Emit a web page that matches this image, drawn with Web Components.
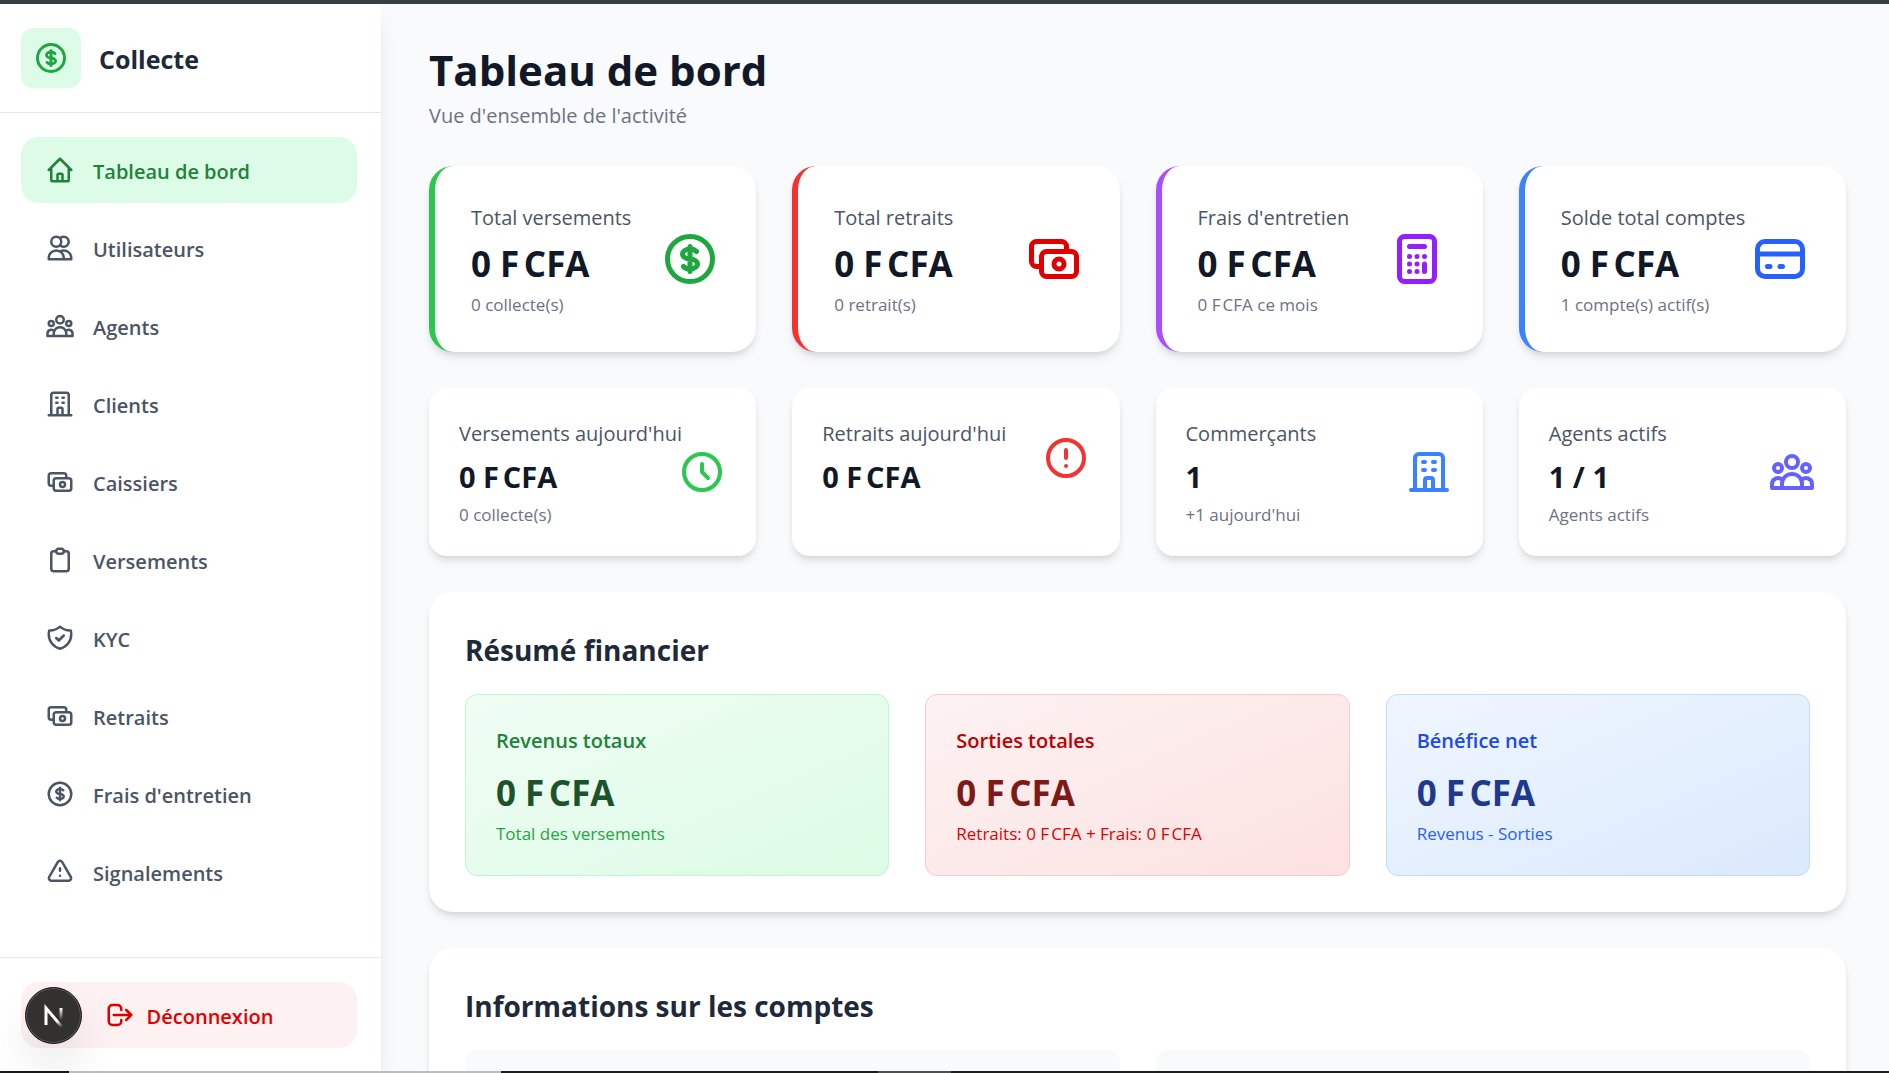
<!DOCTYPE html>
<html lang="fr">
<head>
<meta charset="utf-8">
<meta name="viewport" content="width=device-width, initial-scale=1">
<title>Collecte - Tableau de bord</title>
<style>
html, body{
  margin: 0;
  height: 100%;
}
body{
  overflow: hidden;
  background: #f9fafc;
  color: #111828;
  font-family: "Open Sans", "Noto Sans", sans-serif;
  font-size: 20px;
  line-height: 30px;
}
</style>
</head>
<body>
<app-shell>
  <side-bar slot="side">
    <nav-item icon="home" href="#dashboard" active>Tableau de bord</nav-item>
    <nav-item icon="users" href="#utilisateurs">Utilisateurs</nav-item>
    <nav-item icon="group" href="#agents">Agents</nav-item>
    <nav-item icon="building" href="#clients">Clients</nav-item>
    <nav-item icon="cash" href="#caissiers">Caissiers</nav-item>
    <nav-item icon="clipboard" href="#versements">Versements</nav-item>
    <nav-item icon="shield" href="#kyc">KYC</nav-item>
    <nav-item icon="cash" href="#retraits">Retraits</nav-item>
    <nav-item icon="dollar" href="#frais">Frais d'entretien</nav-item>
    <nav-item icon="warning" href="#signalements">Signalements</nav-item>
  </side-bar>

  <page-header>
    Tableau de bord
    <span slot="sub">Vue d'ensemble de l'activité</span>
  </page-header>

  <card-grid cols="4">
    <stat-card large icon="dollar" label="Total versements" value="0&nbsp;F&#8239;CFA" note="0 collecte(s)" style="--accent:#2bc84f;--icon:#1ea63f"></stat-card>
    <stat-card large icon="cash" label="Total retraits" value="0&nbsp;F&#8239;CFA" note="0 retrait(s)" style="--accent:#f5322f;--icon:#e00000"></stat-card>
    <stat-card large icon="calculator" label="Frais d'entretien" value="0&nbsp;F&#8239;CFA" note="0&nbsp;F&#8239;CFA ce mois" style="--accent:#a94dff;--icon:#931fff"></stat-card>
    <stat-card large icon="card" label="Solde total comptes" value="0&nbsp;F&#8239;CFA" note="1 compte(s) actif(s)" style="--accent:#3b82ff;--icon:#2660ff"></stat-card>
  </card-grid>

  <card-grid cols="4">
    <stat-card icon="clock" label="Versements aujourd'hui" value="0&nbsp;F&#8239;CFA" note="0 collecte(s)" style="--icon:#2bc84f"></stat-card>
    <stat-card icon="alert" label="Retraits aujourd'hui" value="0&nbsp;F&#8239;CFA" style="--icon:#f5322f"></stat-card>
    <stat-card icon="building" label="Commerçants" value="1" note="+1 aujourd'hui" style="--icon:#3b82ff"></stat-card>
    <stat-card icon="group" label="Agents actifs" value="1 / 1" note="Agents actifs" style="--icon:#6461ff"></stat-card>
  </card-grid>

  <page-section heading="Résumé financier">
    <card-grid cols="3">
      <sum-panel tone="green" label="Revenus totaux" value="0&nbsp;F&#8239;CFA">Total des versements</sum-panel>
      <sum-panel tone="red" label="Sorties totales" value="0&nbsp;F&#8239;CFA">Retraits: 0&nbsp;F&#8239;CFA + Frais: 0&nbsp;F&#8239;CFA</sum-panel>
      <sum-panel tone="blue" label="Bénéfice net" value="0&nbsp;F&#8239;CFA">Revenus - Sorties</sum-panel>
    </card-grid>
  </page-section>

  <page-section heading="Informations sur les comptes">
    <card-grid cols="2">
      <info-box></info-box>
      <info-box></info-box>
    </card-grid>
  </page-section>
</app-shell>
<dev-badge></dev-badge>

<script>
const ICONS = {
  home: 'M3 12l2-2m0 0l7-7 7 7M5 10v10a1 1 0 001 1h3m10-11l2 2m-2-2v10a1 1 0 01-1 1h-3m-6 0a1 1 0 001-1v-4a1 1 0 011-1h2a1 1 0 011 1v4a1 1 0 001 1m-6 0h6',
  users: 'M12 4.354a4 4 0 110 5.292M15 21H3v-1a6 6 0 0112 0v1zm0 0h6v-1a6 6 0 00-9-5.197M13 7a4 4 0 11-8 0 4 4 0 018 0z',
  group: 'M17 20h5v-2a3 3 0 00-5.356-1.857M17 20H7m10 0v-2c0-.656-.126-1.283-.356-1.857M7 20H2v-2a3 3 0 015.356-1.857M7 20v-2c0-.656.126-1.283.356-1.857m0 0a5.002 5.002 0 019.288 0M15 7a3 3 0 11-6 0 3 3 0 016 0zm6 3a2 2 0 11-4 0 2 2 0 014 0zM7 10a2 2 0 11-4 0 2 2 0 014 0z',
  building: 'M19 21V5a2 2 0 00-2-2H7a2 2 0 00-2 2v16m14 0h2m-2 0h-5m-9 0H3m2 0h5M9 7h1m-1 4h1m4-4h1m-1 4h1m-5 10v-5a1 1 0 011-1h2a1 1 0 011 1v5m-4 0h4',
  cash: 'M17 9V7a2 2 0 00-2-2H5a2 2 0 00-2 2v6a2 2 0 002 2h2m2 4h10a2 2 0 002-2v-6a2 2 0 00-2-2H9a2 2 0 00-2 2v6a2 2 0 002 2zm7-5a2 2 0 11-4 0 2 2 0 014 0z',
  clipboard: 'M9 5H7a2 2 0 00-2 2v12a2 2 0 002 2h10a2 2 0 002-2V7a2 2 0 00-2-2h-2M9 5a2 2 0 002 2h2a2 2 0 002-2M9 5a2 2 0 012-2h2a2 2 0 012 2',
  shield: 'M9 12l2 2 4-4m5.618-4.016A11.955 11.955 0 0112 2.944a11.955 11.955 0 01-8.618 3.04A12.02 12.02 0 003 9c0 5.591 3.824 10.29 9 11.622 5.176-1.332 9-6.03 9-11.622 0-1.042-.133-2.052-.382-3.016z',
  dollar: 'M12 8c-1.657 0-3 .895-3 2s1.343 2 3 2 3 .895 3 2-1.343 2-3 2m0-8c1.11 0 2.08.402 2.599 1M12 8V7m0 1v8m0 0v1m0-1c-1.11 0-2.08-.402-2.599-1M21 12a9 9 0 11-18 0 9 9 0 0118 0z',
  warning: 'M12 9v2m0 4h.01m-6.938 4h13.856c1.54 0 2.502-1.667 1.732-3L13.732 4c-.77-1.333-2.694-1.333-3.464 0L3.34 16c-.77 1.333.192 3 1.732 3z',
  logout: 'M17 16l4-4m0 0l-4-4m4 4H7m6 4v1a3 3 0 01-3 3H6a3 3 0 01-3-3V7a3 3 0 013-3h4a3 3 0 013 3v1',
  calculator: 'M9 7h6m0 10v-3m-3 3h.01M9 17h.01M9 14h.01M12 14h.01M15 11h.01M12 11h.01M9 11h.01M7 21h10a2 2 0 002-2V5a2 2 0 00-2-2H7a2 2 0 00-2 2v14a2 2 0 002 2z',
  card: 'M3 10h18M7 15h1m4 0h1m-7 4h12a3 3 0 003-3V8a3 3 0 00-3-3H6a3 3 0 00-3 3v8a3 3 0 003 3z',
  clock: 'M12 8v4l3 3m6-3a9 9 0 11-18 0 9 9 0 0118 0z',
  alert: 'M12 8v4m0 4h.01M21 12a9 9 0 11-18 0 9 9 0 0118 0z'
}

// every element only renders once, from its attributes
class Base extends HTMLElement {
  constructor(){
    super();
    this.attachShadow({mode:'open'});
  }
  connectedCallback(){
    this.shadowRoot.innerHTML = this.render()
  }
  attr(name){
    return this.getAttribute(name) || ''
  }
}

window.customElements.define('ui-icon', class extends Base {
  render(){
    return `
<style>
:host{
  display: block;
  flex: none;
  width: 30px;
  height: 30px;
}
svg{
  display: block;
  width: 100%;
  height: 100%;
}
</style>
<svg viewBox="0 0 24 24" fill="none" stroke="currentColor" stroke-width="2" stroke-linecap="round" stroke-linejoin="round" aria-hidden="true">
  <path d="${ICONS[this.attr('name')]}"/>
</svg>`
  }
})

window.customElements.define('app-shell', class extends Base {
  render(){
    return `
<style>
:host{
  display: flex;
  box-sizing: border-box;
  height: 100vh;
  border-top: 4px solid #383f40;
}
main{
  flex: 1;
  min-width: 0;
  overflow: hidden;
  display: flex;
  flex-direction: column;
  gap: 36px;
  padding: 36px 43px 0 48px;
}
</style>
<slot name="side"></slot>
<main><slot></slot></main>`
  }
})

window.customElements.define('side-bar', class extends Base {
  render(){
    return `
<style>
:host{
  display: flex;
  flex-direction: column;
  flex: none;
  width: 381px;
  background: white;
  box-shadow: 0 15px 23px -5px rgba(0,0,0,.1), 0 6px 9px -6px rgba(0,0,0,.1);
}
header{
  display: flex;
  align-items: center;
  gap: 18px;
  padding: 24px 24px 24px 21px;
  border-bottom: 1px solid #e3e5ea;
}
.logo{
  display: grid;
  place-items: center;
  width: 60px;
  height: 60px;
  border-radius: 12px;
  background: #dcfce7;
  color: #1ea63f;
}
.logo ui-icon{
  width: 36px;
  height: 36px;
}
strong{
  padding-top: 2px;
  font-size: 25px;
  font-weight: 700;
  color: #1e2939;
}
nav{
  flex: 1;
  display: flex;
  flex-direction: column;
  gap: 12px;
  padding: 24px 24px 24px 21px;
}
footer{
  padding: 24px 24px 25px 21px;
  border-top: 1px solid #e5e7eb;
}
button{
  display: flex;
  align-items: center;
  justify-content: center;
  gap: 12px;
  width: 100%;
  padding: 16px 18px;
  border: none;
  border-radius: 18px;
  background: #fdf1f1;
  color: #e00000;
  font: inherit;
  font-weight: 600;
  cursor: pointer;
}
button span{
  padding-top: 4px;
}
</style>
<header>
  <div class="logo"><ui-icon name="dollar"></ui-icon></div>
  <strong>Collecte</strong>
</header>
<nav><slot></slot></nav>
<footer>
  <button type="button"><ui-icon name="logout"></ui-icon><span>Déconnexion</span></button>
</footer>`
  }
})

window.customElements.define('nav-item', class extends Base {
  render(){
    return `
<style>
:host{
  display: block;
}
a{
  display: flex;
  align-items: center;
  gap: 18px;
  padding: 16px 24px;
  border-radius: 18px;
  color: #4b5565;
  font-weight: 600;
  text-decoration: none;
}
span{
  padding-top: 4px;
}
:host([active]) a{
  background: #dcfce7;
  color: #1d8339;
}
</style>
<a href="${this.attr('href')}"><ui-icon name="${this.attr('icon')}"></ui-icon><span><slot></slot></span></a>`
  }
})

window.customElements.define('page-header', class extends Base {
  render(){
    return `
<style>
:host{
  display: block;
}
h1{
  margin: 0 0 2px;
  font-size: 42px;
  line-height: 60px;
  font-weight: 700;
}
p{
  margin: 0;
  color: #6b7382;
  line-height: 28px;
}
</style>
<h1><slot></slot></h1>
<p><slot name="sub"></slot></p>`
  }
})

window.customElements.define('card-grid', class extends Base {
  render(){
    return `
<style>
:host{
  display: grid;
  grid-template-columns: repeat(${this.attr('cols')}, minmax(0, 1fr));
  gap: 36px;
}
</style>
<slot></slot>`
  }
})

window.customElements.define('stat-card', class extends Base {
  render(){
    const note = this.attr('note')
    return `
<style>
:host{
  display: block;
  padding: 30px;
  border-radius: 18px;
  background: white;
  box-shadow: 0 6px 9px -1px rgba(0,0,0,.1), 0 3px 6px -3px rgba(0,0,0,.1);
}
:host([large]){
  padding: 36px;
  border-left: 6px solid var(--accent);
  border-radius: 24px;
}
.row{
  display: flex;
  align-items: center;
  justify-content: space-between;
}
.text{
  display: flex;
  flex-direction: column;
  gap: 6px;
  min-width: 0;
  white-space: nowrap;
}
p{
  margin: 0;
}
.label{
  color: #4b5565;
  line-height: 32px;
}
.value{
  font-size: 29px;
  line-height: 42px;
  font-weight: 700;
}
:host([large]) .value{
  font-size: 35px;
  line-height: 48px;
}
.note{
  color: #6b7382;
  font-size: 17px;
  line-height: 22px;
}
ui-icon{
  width: 48px;
  height: 48px;
  color: var(--icon);
}
:host([large]) ui-icon{
  width: 60px;
  height: 60px;
}
</style>
<div class="row">
  <div class="text">
    <p class="label">${this.attr('label')}</p>
    <p class="value">${this.attr('value')}</p>
    ${note ? `<p class="note">${note}</p>` : ''}
  </div>
  <ui-icon name="${this.attr('icon')}"></ui-icon>
</div>`
  }
})

window.customElements.define('page-section', class extends Base {
  render(){
    return `
<style>
:host{
  display: block;
  flex: none;
  padding: 36px;
  border-radius: 24px;
  background: white;
  box-shadow: 0 6px 9px -1px rgba(0,0,0,.1), 0 3px 6px -3px rgba(0,0,0,.1);
}
h2{
  margin: 0 0 22px;
  color: #1e2939;
  font-size: 28px;
  line-height: 44px;
  font-weight: 700;
}
</style>
<h2>${this.attr('heading')}</h2>
<slot></slot>`
  }
})

window.customElements.define('sum-panel', class extends Base {
  render(){
    return `
<style>
:host{
  display: block;
  padding: 30px;
  border: 1px solid;
  border-radius: 12px;
}
:host([tone=green]){
  --label: #1d8339;
  --value: #1c532d;
  --note: #1ea63f;
  border-color: #bdf7d0;
  background: linear-gradient(to bottom right, #f0fdf4, #dcfbe5);
}
:host([tone=red]){
  --label: #bb0003;
  --value: #7d1a18;
  --note: #e00000;
  border-color: #fac9c9;
  background: linear-gradient(to bottom right, #fdf2f2, #fce1e1);
}
:host([tone=blue]){
  --label: #1d4ae6;
  --value: #1e3a8f;
  --note: #2660ff;
  border-color: #bfdbfe;
  background: linear-gradient(to bottom right, #eff6ff, #dbe9fd);
}
p{
  margin: 0;
}
.label{
  color: var(--label);
  line-height: 32px;
  font-weight: 600;
}
.value{
  margin: 12px 0 6px;
  color: var(--value);
  font-size: 35px;
  line-height: 48px;
  font-weight: 700;
}
.note{
  color: var(--note);
  font-size: 17px;
  line-height: 22px;
}
</style>
<p class="label">${this.attr('label')}</p>
<p class="value">${this.attr('value')}</p>
<p class="note"><slot></slot></p>`
  }
})

window.customElements.define('info-box', class extends Base {
  render(){
    return `
<style>
:host{
  display: block;
  min-height: 120px;
  border-radius: 12px;
  background: #f9fafb;
}
</style>
<slot></slot>`
  }
})

// round framework badge over the sidebar, and the thin strip under the page
window.customElements.define('dev-badge', class extends Base {
  render(){
    return `
<style>
button{
  position: fixed;
  left: 25px;
  bottom: 29px;
  display: grid;
  place-items: center;
  width: 57px;
  height: 57px;
  padding: 0;
  border: 1px solid #151515;
  border-radius: 50%;
  background: #32312f;
  box-shadow: inset 0 0 0 1px #5a5a5a, 0 24px 48px -6px rgba(0,0,0,.14);
}
svg{
  width: 40px;
  height: 40px;
}
.strip{
  position: fixed;
  left: 0;
  right: 0;
  bottom: 0;
  height: 2px;
  background: linear-gradient(to right, #1c1618 69px, #bcbcbc 69px 501px, #1a1d1d 501px 878px, #4c4f4f 878px 951px, #1a1d1d 951px);
}
</style>
<button type="button" aria-label="Outils Next.js">
  <svg viewBox="0 0 40 40" fill="none">
    <defs>
      <linearGradient id="a" x1="12" y1="10" x2="28" y2="31" gradientUnits="userSpaceOnUse"><stop offset=".7" stop-color="#fff"/><stop offset="1" stop-color="#fff" stop-opacity="0"/></linearGradient>
      <linearGradient id="b" x1="27" y1="12" x2="27" y2="24" gradientUnits="userSpaceOnUse"><stop stop-color="#fff"/><stop offset="1" stop-color="#fff" stop-opacity="0"/></linearGradient>
    </defs>
    <path d="M12 29V12L28 31" stroke="url(#a)" stroke-width="3"/>
    <path d="M27 12v13" stroke="url(#b)" stroke-width="3"/>
  </svg>
</button>
<div class="strip"></div>`
  }
})
</script>
</body>
</html>
